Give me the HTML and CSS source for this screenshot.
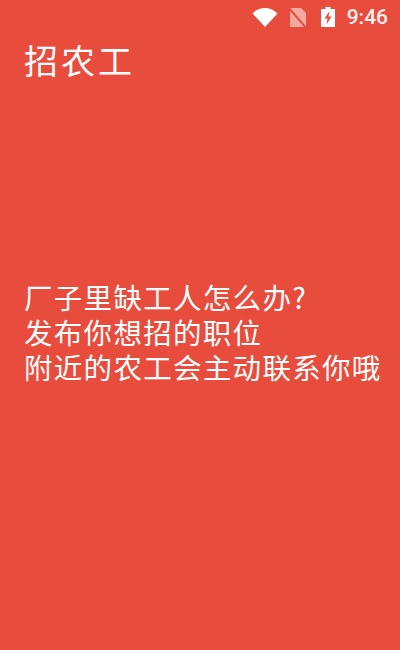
FILE: index.html
```html
<!doctype html>
<html lang="zh">

<head>
  <meta charset="UTF-8">
  <meta name="viewport" content="width=device-width, initial-scale=1.0">
  <title>招农工</title>
  <link rel="stylesheet" href="styles.css">
</head>

<body>
  <div class="status-bar">
    <svg class="icon-wifi" width="26" height="20" viewBox="0 0 26 20">
      <path d="M0.500 6.500C4 3 8.300 1 13 1S22 3 25.500 6.500L13 20Z" fill="#fff" />
    </svg>
    <svg class="icon-sim" width="20" height="22" viewBox="0 0 20 22">
      <path d="M2 2H13L18 7V21H2Z" fill="#f4a9a0" />
      <path d="M0 1L19 23" stroke="#e74c3c" stroke-width="2" />
    </svg>
    <svg class="icon-battery" width="14" height="22" viewBox="0 0 14 22">
      <path d="M4.500 1H9.500V3H14V21H0V3H4.500Z" fill="#fff" />
      <path d="M8.500 5L3.500 12.500H6.500L5.500 18.500L10.500 10.500H7.500Z" fill="#e74c3c" />
    </svg>
    <span class="time">9:46</span>
  </div>

  <h1 class="title">招农工</h1>

  <div class="intro">
    <p>厂子里缺工人怎么办?</p>
    <p>发布你想招的职位</p>
    <p>附近的农工会主动联系你哦</p>
  </div>
</body>

</html>
```

FILE: styles.css
```css
* {
  margin: 0;
  padding: 0;
  box-sizing: border-box;
}

body {
  width: 400px;
  height: 650px;
  overflow: hidden;
  background-color: #e74c3c;
  color: #fff;
  font-family: "Noto Sans CJK SC", "Roboto", sans-serif;
}

.status-bar {
  display: flex;
  align-items: center;
  justify-content: flex-end;
  height: 34px;
  padding-right: 12px;
}

.icon-wifi {
  margin-right: 10px;
}

.icon-sim {
  margin-right: 13px;
}

.icon-battery {
  margin-right: 12px;
}

.time {
  font-family: "Roboto", sans-serif;
  font-size: 21px;
  font-weight: 500;
  color: #fdf0ee;
}

.title {
  padding: 3px 0 0 24px;
  font-size: 34px;
  font-weight: 400;
  letter-spacing: 3px;
  line-height: 46px;
}

.intro {
  padding: 196px 0 0 24px;
  font-size: 28.500px;
  letter-spacing: 1.300px;
  line-height: 35px;
  white-space: nowrap;
}
```
